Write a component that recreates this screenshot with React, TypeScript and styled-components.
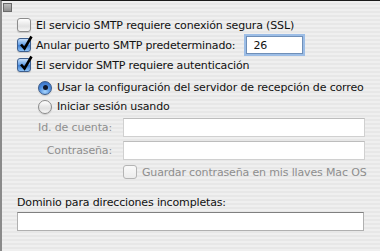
import React from "react";
import styled, { createGlobalStyle, css } from "styled-components";

const Global = createGlobalStyle`
  html, body { margin: 0; padding: 0; }
  body { width: 380px; height: 251px; overflow: hidden; background: #ececec; }
`;

const Frame = styled.div`
  position: relative;
  box-sizing: border-box;
  width: 380px;
  height: 251px;
  border-top: 1px solid #1a1a1a;
  border-left: 2px solid #8a8a8a;
  background: repeating-linear-gradient(
    to bottom,
    #efefef 0px,
    #efefef 2px,
    #e7e7e7 2px,
    #e7e7e7 4px
  );
  font-family: "DejaVu Sans", "Liberation Sans", sans-serif;
  font-size: 11px;
  letter-spacing: -0.15px;
  color: #111;
  padding: 14px 0 0 15px;
  display: flex;
  flex-direction: column;
`;

const CornerBox = styled.div`
  position: absolute;
  left: 1px;
  top: 2px;
  width: 7px;
  height: 7px;
  border: 1px solid #6a6a6a;
  background: linear-gradient(#bdbdbd, #8f8f8f);
`;

const Row = styled.div<{ $h?: number; $indent?: number; $mt?: number }>`
  display: flex;
  align-items: center;
  height: ${(p) => p.$h ?? 20}px;
  padding-left: ${(p) => p.$indent ?? 0}px;
  margin-top: ${(p) => p.$mt ?? 0}px;
  gap: 5px;
  white-space: nowrap;
`;

const Box = styled.span<{ $checked?: boolean; $disabled?: boolean }>`
  box-sizing: border-box;
  flex: none;
  width: 14px;
  height: 14px;
  border-radius: 3px;
  position: relative;
  border: 1px solid ${(p) => (p.$disabled ? "#b4b4b4" : p.$checked ? "#3d5f8f" : "#8c8c8c")};
  background: ${(p) =>
    p.$checked
      ? "linear-gradient(#c9e0fb 0%, #6aa4e8 45%, #3f7fd2 55%, #8fc3f6 100%)"
      : p.$disabled
      ? "linear-gradient(#fafafa, #ececec)"
      : "linear-gradient(#ffffff, #e2e2e2 60%, #f6f6f6)"};
  box-shadow: ${(p) => (p.$disabled ? "none" : "0 1px 1px rgba(0,0,0,0.15)")};
`;

const Tick = styled.svg`
  position: absolute;
  left: 1px;
  top: -4px;
`;

const Radio = styled.span<{ $on?: boolean }>`
  box-sizing: border-box;
  flex: none;
  width: 14px;
  height: 14px;
  border-radius: 50%;
  display: flex;
  align-items: center;
  justify-content: center;
  border: 1px solid ${(p) => (p.$on ? "#3a5a88" : "#8a8a8a")};
  background: ${(p) =>
    p.$on
      ? "radial-gradient(circle at 50% 80%, #a8d4fb 0%, #4f8fe0 50%, #2e64b8 100%)"
      : "linear-gradient(#ffffff, #e0e0e0 60%, #f8f8f8)"};
  box-shadow: 0 1px 1px rgba(0,0,0,0.15);
  ${(p) =>
    p.$on &&
    css`
      &::after {
        content: "";
        width: 5px;
        height: 5px;
        border-radius: 50%;
        background: #10182a;
      }
    `}
`;

const Label = styled.span<{ $disabled?: boolean }>`
  color: ${(p) => (p.$disabled ? "#8e8e8e" : "#111")};
`;

const PortWrap = styled.div`
  margin-left: 6px;
`;

const Field = styled.div<{ $w: number; $disabled?: boolean; $focus?: boolean; $h?: number }>`
  box-sizing: border-box;
  width: ${(p) => p.$w}px;
  height: ${(p) => p.$h ?? 19}px;
  background: #fff;
  border: 1px solid ${(p) => (p.$disabled ? "#d0d0d0" : "#b0b0b0")};
  border-top-color: ${(p) => (p.$disabled ? "#bdbdbd" : "#808080")};
  display: flex;
  align-items: center;
  padding-left: 6px;
  ${(p) =>
    p.$focus &&
    css`
      border: 1px solid #6f8fb8;
      box-shadow: 0 0 0 2px #9cbde6;
    `}
`;

const FieldRow = styled.div<{ $mt?: number }>`
  display: flex;
  align-items: center;
  margin-top: ${(p) => p.$mt ?? 0}px;
`;

const FieldLabel = styled.span`
  width: 95px;
  text-align: right;
  color: #8e8e8e;
  padding-right: 11px;
`;

const Check: React.FC = () => (
  <Tick width="14" height="16" viewBox="0 0 14 16">
    <path d="M2 9.5 L5.5 13.5 L12.5 1.5" stroke="#000" strokeWidth="2.6" fill="none" strokeLinejoin="miter" />
  </Tick>
);

export default function App() {
  return (
    <>
      <Global />
      <Frame>
        <CornerBox />
        <Row>
          <Box />
          <Label>El servicio SMTP requiere conexión segura (SSL)</Label>
        </Row>
        <Row>
          <Box $checked>
            <Check />
          </Box>
          <Label>Anular puerto SMTP predeterminado:</Label>
          <PortWrap>
            <Field $w={57} $h={18} $focus>
              26
            </Field>
          </PortWrap>
        </Row>
        <Row>
          <Box $checked>
            <Check />
          </Box>
          <Label>El servidor SMTP requiere autenticación</Label>
        </Row>
        <Row $indent={21} $mt={3} $h={19}>
          <Radio $on />
          <Label>Usar la configuración del servidor de recepción de correo</Label>
        </Row>
        <Row $indent={21} $h={19}>
          <Radio />
          <Label>Iniciar sesión usando</Label>
        </Row>
        <FieldRow $mt={2}>
          <FieldLabel>Id. de cuenta:</FieldLabel>
          <Field $w={242} $disabled />
        </FieldRow>
        <FieldRow $mt={4}>
          <FieldLabel>Contraseña:</FieldLabel>
          <Field $w={242} $disabled />
        </FieldRow>
        <Row $indent={106} $mt={2}>
          <Box $disabled />
          <Label $disabled>Guardar contraseña en mis llaves Mac OS</Label>
        </Row>
        <Row $mt={12} $h={17}>
          <Label>Dominio para direcciones incompletas:</Label>
        </Row>
        <FieldRow $mt={1}>
          <Field $w={347} />
        </FieldRow>
      </Frame>
    </>
  );
}
